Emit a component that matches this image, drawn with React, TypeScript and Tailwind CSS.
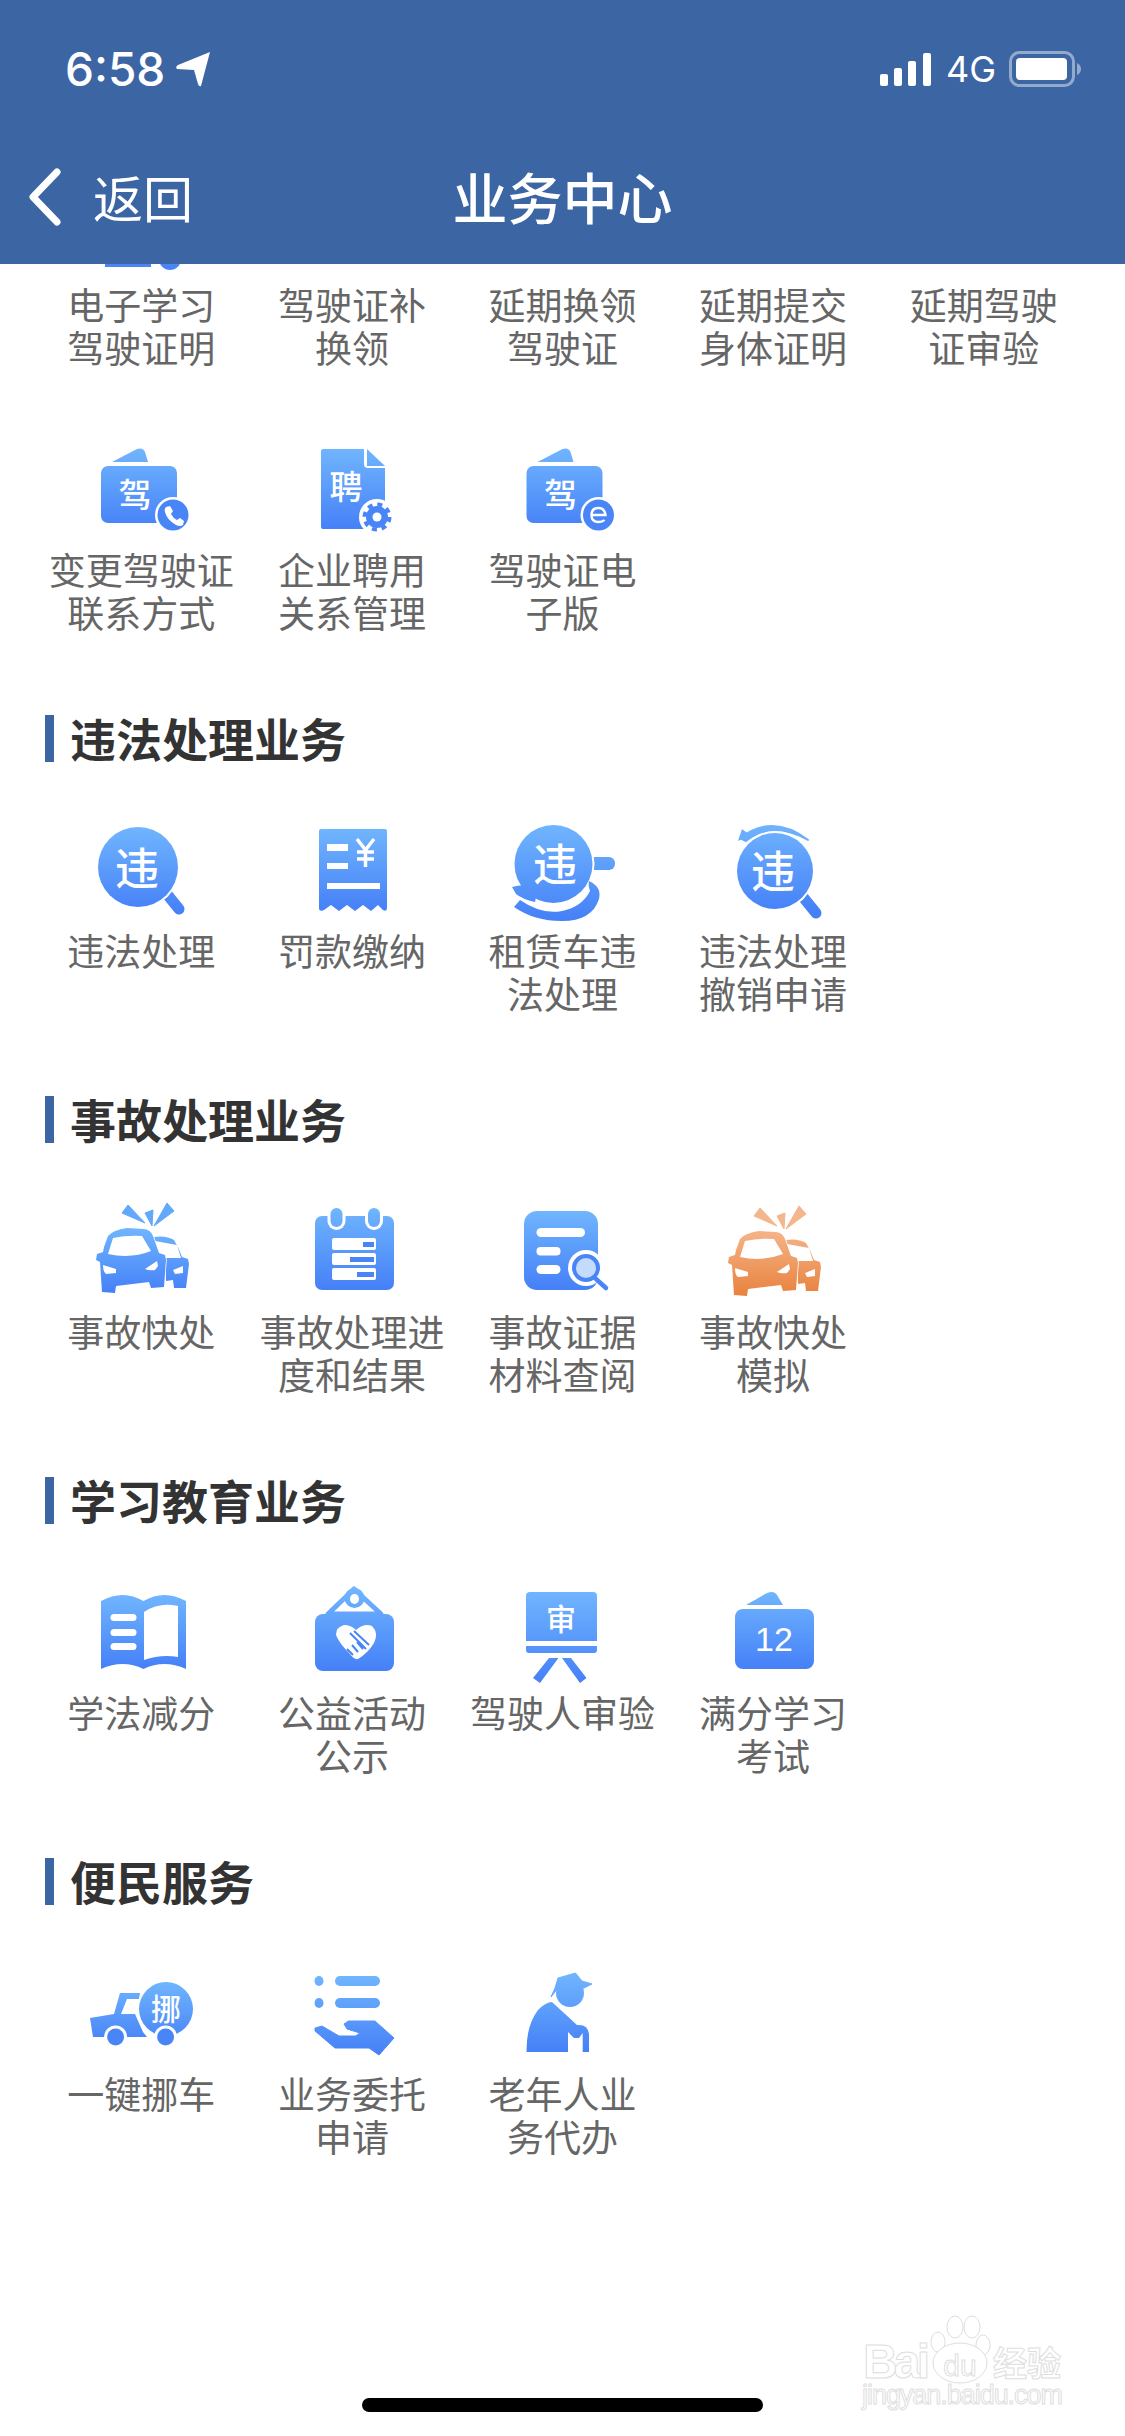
import type { ReactNode } from "react";

// every icon is drawn in a 120x110 box centred on its grid column
function Ico({ id, y1, y2, from = "#70b5fe", to = "#4580f7", children }: { id: string; y1: number; y2: number; from?: string; to?: string; children: ReactNode }) {
  return (
    <svg width="120" height="110" viewBox="0 0 120 110" className="overflow-visible">
      <defs>
        <linearGradient id={id} gradientUnits="userSpaceOnUse" x1="0" x2="0" y1={y1} y2={y2}>
          <stop offset="0" stopColor={from} />
          <stop offset="1" stopColor={to} />
        </linearGradient>
      </defs>
      {children}
    </svg>
  );
}

function Glyph({ x, y, size, children }: { x: number; y: number; size: number; children: string }) {
  return (
    <text x={x} y={y} fontSize={size} fontWeight={500} fill="#fff" textAnchor="middle" dominantBaseline="central" fontFamily="'Noto Sans CJK SC', sans-serif">
      {children}
    </text>
  );
}

function CardIcon({ id, dx, badge }: { id: string; dx: number; badge: "phone" | "e" }) {
  const f = `url(#${id})`;
  return (
    <Ico id={id} y1={9} y2={90}>
      <g transform={`translate(${dx} 0)`}>
        <path d="M31 22 L56 9 Q62 7 64 12 L67 22 Z" fill={f} />
        <rect x="20" y="26" width="76" height="57" rx="7" fill={f} />
        <Glyph x={54} y={53} size={33}>驾</Glyph>
        <circle cx="92" cy="75" r="18" fill="#fff" />
        <circle cx="92" cy="75" r="15.5" fill="#4a85f8" />
        {badge === "phone" ? (
          <path d="M85 67 l4 -1 l3 5 l-2 3 q2 4 6 6 l3 -2 l4 3 l-1 4 q-3 2 -7 0 q-9 -5 -11 -13 q-1 -3 1 -5 z" fill="#fff" />
        ) : (
          <g fill="none" stroke="#fff" strokeWidth="2.4">
            <path d="M85 75 H99 Q98 68 92 68 Q85 68 85 75 Q85 82 92 82 Q96 82 98 80" />
          </g>
        )}
      </g>
    </Ico>
  );
}

function SearchViolation({ id, cx, cy, r, tx, ty, top }: { id: string; cx: number; cy: number; r: number; tx: number; ty: number; top?: boolean }) {
  const f = `url(#${id})`;
  return (
    <Ico id={id} y1={top ? 1 : 6} y2={92}>
      {top && (
        <>
          <path d="M29 8 L25 20 L37 14 Z" fill={f} />
          <path d="M27 17 Q60 -8 95 19 Q60 -1 33 20 Z" fill={f} stroke={f} strokeWidth="2" strokeLinejoin="round" />
        </>
      )}
      <path d={`M${cx + 28} ${cy + 26} L${cx + 41} ${cy + 42}`} stroke={f} strokeWidth="11" strokeLinecap="round" />
      <circle cx={cx} cy={cy} r={r + 2} fill="#fff" />
      <circle cx={cx} cy={cy} r={r} fill={f} />
      <Glyph x={tx} y={ty} size={44}>违</Glyph>
    </Ico>
  );
}

function BillIcon() {
  const f = "url(#bill)";
  return (
    <Ico id="bill" y1={8} y2={90}>
      <path d="M27 10 Q27 8 29 8 H93 Q95 8 95 10 V87 Q95 91 91 89 L86 84 L79 90 L71 84 L63 90 L55 84 L47 90 L39 84 L32 89 Q27 91 27 87 Z" fill={f} />
      <rect x="35" y="23" width="21" height="7" fill="#fff" />
      <rect x="35" y="42" width="21" height="6" fill="#fff" />
      <rect x="35" y="62" width="53" height="6" fill="#fff" />
      <path d="M65 18 L73.5 29 L82 18 M73.5 29 V46 M65 31 H82 M65 38 H82" fill="none" stroke="#fff" strokeWidth="3.5" />
    </Ico>
  );
}

function RentalIcon() {
  const f = "url(#rental)";
  return (
    <Ico id="rental" y1={4} y2={100}>
      <rect x="80" y="36" width="33" height="13" rx="6" fill={f} />
      <circle cx="51.5" cy="43" r="41" fill="#fff" />
      <circle cx="51.5" cy="43" r="39" fill={f} />
      <Glyph x={53} y={41} size={44}>违</Glyph>
      <path d="M10 66 Q30 60 54 75 L35 72 L33 81 Q20 78 14 73 Z" fill={f} />
      <path d="M12 86 L18 79 Q40 94 60 90 Q80 86 88 70 Q86 64 87 60 Q100 66 97 78 Q90 100 60 100 Q32 100 12 86 Z" fill={f} />
    </Ico>
  );
}

function CarIcon({ id, dy, from, to, spark }: { id: string; dy: number; from: string; to: string; spark: string }) {
  const f = `url(#${id})`;
  return (
    <Ico id={id} y1={26 + dy} y2={91 + dy} from={from} to={to}>
      <g transform={`translate(0 ${dy})`}>
        <path d="M41 11 L47 3 L64 21 Z M64 11 L72 8 L71 24 Z M86 1 L93 9 L73 24 Z" fill={spark} stroke={spark} strokeWidth="1" strokeLinejoin="round" />
        <path d="M73 35 Q85 33 93 38 Q98 46 101 55 L107 57 L108 62 L105 86 L93 86 L92 78 L85 79 L84 56 L100 56 L96 43 L74 39 Z" fill={f} />
        <path d="M23 45 L27 34 Q32 28 46 26 L63 27 Q70 28 72 34 L78 51 L84 53 L85 58 L83 85 L70 86 L68 80 L35 84 L34 91 L21 90 L19 60 L15 58 L16 52 L22 50 Z" fill={f} stroke="#fff" strokeWidth="1.5" paintOrder="stroke" />
        <path d="M27 52 L32 36 Q46 33 61 34 L70 49 Q50 57 27 52 Z" fill="#fff" />
        <path d="M22 63 L35 67 L35 71 L25 72 Q22 70 22 63 Z M64 67 L76 59 L77 64 L74 68 Q68 69 64 67 Z M92 68 L102 64 L102 71 L94 72 Z" fill="#fff" />
      </g>
    </Ico>
  );
}

function ClipboardIcon() {
  const f = "url(#clip)";
  return (
    <Ico id="clip" y1={6} y2={88}>
      <rect x="23" y="14" width="79" height="74" rx="7" fill={f} />
      {[44.5, 82].map((x) => (
        <g key={x}>
          <rect x={x - 9} y="4" width="18" height="24" rx="9" fill="#fff" />
          <rect x={x - 6} y="6" width="12" height="19" rx="6" fill={f} />
        </g>
      ))}
      {[[36, 71, 11], [51, 58, 24], [66, 65, 17]].map(([y, x, w]) => (
        <g key={y}>
          <rect x="40" y={y} width="44" height="12" rx="2" fill="#fff" />
          <rect x={x} y={y + 4} width={w} height="5" fill="#4a85f8" />
        </g>
      ))}
    </Ico>
  );
}

function DocSearchIcon() {
  const f = "url(#docs)";
  return (
    <Ico id="docs" y1={9} y2={88}>
      <rect x="22" y="9" width="74" height="79" rx="13" fill={f} />
      <rect x="34.5" y="26" width="48.5" height="9" rx="4.5" fill="#fff" />
      <rect x="34.5" y="45" width="24" height="8.5" rx="4" fill="#fff" />
      <rect x="34.5" y="63" width="24" height="9" rx="4.5" fill="#fff" />
      <circle cx="84" cy="66" r="18" fill="#fff" />
      <circle cx="84" cy="66" r="12" fill="#c4dcfb" stroke="#4a85f8" strokeWidth="4" />
      <path d="M94 77 L104 86" stroke="#4a85f8" strokeWidth="4.5" strokeLinecap="round" />
    </Ico>
  );
}

function BookIcon() {
  const f = "url(#book)";
  return (
    <Ico id="book" y1={12} y2={86}>
      <path d="M20 18 Q42 6 62.5 18 Q83 6 105 18 V86 Q83 76 62.5 86 Q42 76 20 86 Z" fill={f} />
      <path d="M63 29 Q78 19 97 23 V74 Q80 71 63 77 Z" fill="#fff" />
      <rect x="29.5" y="31" width="26" height="7" rx="3.5" fill="#fff" />
      <rect x="29.5" y="46" width="26" height="7" rx="3.5" fill="#fff" />
      <rect x="29.5" y="60" width="26" height="7" rx="3.5" fill="#fff" />
    </Ico>
  );
}

function SignIcon() {
  const f = "url(#sign)";
  return (
    <Ico id="sign" y1={6} y2={88}>
      <path d="M36 31 L62 6 L89 31 Z" fill="none" stroke={f} strokeWidth="5" strokeLinejoin="round" />
      <ellipse cx="62.5" cy="15" rx="10" ry="10" fill={f} />
      <ellipse cx="62.5" cy="16" rx="4.5" ry="5" fill="#fff" />
      <rect x="23" y="31" width="79" height="57" rx="8" fill={f} />
      <path d="M64 47 Q72 40 80 43 Q87 50 82 60 Q76 70 66 76 Q62 77 58 71 Q47 60 44 52 Q44 44 52 42 Q59 42 64 47 Z" fill="#fff" />
      <path d="M58 50 L74 66 M62 48 L77 62 M55 66 L61 72 M60 62 L66 69 M65 59 L71 66" stroke="#4a85f8" strokeWidth="2" fill="none" />
    </Ico>
  );
}

function EaselIcon() {
  const f = "url(#easel)";
  return (
    <Ico id="easel" y1={9} y2={100}>
      <path d="M24 13 Q24 9 28 9 H91 Q95 9 95 13 V58 H24 Z" fill={f} />
      <path d="M24 63 H95 V67 Q95 70 92 70 H27 Q24 70 24 67 Z" fill={f} />
      <path d="M47 75 H56.5 L38 100 L31 95 Z M60 75 H69 L84.5 95 L78 100 Z" fill={f} />
      <Glyph x={59} y={34} size={30}>审</Glyph>
    </Ico>
  );
}

function CalendarIcon() {
  const f = "url(#cal)";
  return (
    <Ico id="cal" y1={9} y2={86}>
      <path d="M33 22 L54 10 Q61 7 64 12 L70 22 Z" fill={f} />
      <rect x="22" y="26" width="79" height="60" rx="8" fill={f} />
      <text x="61" y="68" fontSize="34" fill="#fff" textAnchor="middle" fontFamily="'Liberation Sans', sans-serif">12</text>
    </Ico>
  );
}

function TowIcon() {
  const f = "url(#tow)";
  return (
    <Ico id="tow" y1={18} y2={82}>
      <path d="M39 29 H59 L58 35 H46 L40 50 H54 L62 68 L66 73 H12 L9 54 L33 50 Z" fill={f} />
      <circle cx="85" cy="45" r="29" fill="#fff" />
      <circle cx="85" cy="45" r="27" fill={f} />
      <Glyph x={85} y={43} size={30}>挪</Glyph>
      {[34.6, 84.6].map((x) => (
        <g key={x}>
          <circle cx={x} cy="73" r="11.5" fill="#fff" />
          <circle cx={x} cy="73" r="8.5" fill="#4a85f8" />
        </g>
      ))}
    </Ico>
  );
}

function HandIcon() {
  const f = "url(#hand)";
  return (
    <Ico id="hand" y1={12} y2={91}>
      <ellipse cx="27" cy="17" rx="4.5" ry="5" fill={f} />
      <ellipse cx="27" cy="39" rx="4.5" ry="5" fill={f} />
      <rect x="43" y="12" width="45" height="10" rx="5" fill={f} />
      <rect x="43" y="34" width="45" height="10" rx="5" fill={f} />
      <path d="M23 64 L30 62 L47 72 H63.5 L68 69 L55 65 L52 60 L56.5 57 H83 L102 74 L87 91 L77 84 H43 L23 67 Z" fill={f} stroke={f} strokeLinejoin="round" />
    </Ico>
  );
}

function ElderIcon() {
  const f = "url(#elder)";
  return (
    <Ico id="elder" y1={9} y2={88}>
      <circle cx="68" cy="29" r="14" fill={f} />
      <path d="M56 14 L73.5 9 L80 17 L90 20 L82 24 H56 L49 33 L53 24 Z" fill={f} stroke={f} strokeLinejoin="round" />
      <path d="M24.6 88 Q24 62 36 46 Q44 38 50 38 L75 61 Q86 60 87 70 V88 H80.7 V69 L77 74 H72 L66 68 V88 Z" fill={f} />
    </Ico>
  );
}

type Item = { label: string; icon: ReactNode };

const licenceRow: string[] = ["电子学习\n驾驶证明", "驾驶证补\n换领", "延期换领\n驾驶证", "延期提交\n身体证明", "延期驾驶\n证审验"];

const licenceRow2: Item[] = [
  { label: "变更驾驶证\n联系方式", icon: <CardIcon id="card1" dx={0} badge="phone" /> },
  {
    label: "企业聘用\n关系管理",
    icon: (
      <Ico id="hire" y1={9} y2={90}>
        <path d="M29 11 Q29 9 31 9 H72 V24 Q72 28 76 28 H93 V89 H31 Q29 89 29 87 Z" fill="url(#hire)" />
        <path d="M75 9 L93 26 H75 Z" fill="url(#hire)" />
        <Glyph x={54} y={45} size={33}>聘</Glyph>
        <circle cx="85" cy="77" r="18" fill="#fff" />
        <circle cx="85" cy="77" r="11" fill="#4a85f8" />
        <circle cx="85" cy="77" r="12.5" fill="none" stroke="#4a85f8" strokeWidth="4" strokeDasharray="5 4.8" />
        <circle cx="85" cy="77" r="4.5" fill="#fff" />
      </Ico>
    ),
  },
  { label: "驾驶证电\n子版", icon: <CardIcon id="card2" dx={4.5} badge="e" /> },
];

const sections: { title: string; items: Item[] }[] = [
  {
    title: "违法处理业务",
    items: [
      { label: "违法处理", icon: <SearchViolation id="v1" cx={57} cy={46} r={40} tx={56} ty={45} /> },
      { label: "罚款缴纳", icon: <BillIcon /> },
      { label: "租赁车违\n法处理", icon: <RentalIcon /> },
      { label: "违法处理\n撤销申请", icon: <SearchViolation id="v2" cx={62} cy={50} r={38} tx={60} ty={48} top /> },
    ],
  },
  {
    title: "事故处理业务",
    items: [
      { label: "事故快处", icon: <CarIcon id="car1" dy={0} from="#70b5fe" to="#4580f7" spark="#62a8fb" /> },
      { label: "事故处理进\n度和结果", icon: <ClipboardIcon /> },
      { label: "事故证据\n材料查阅", icon: <DocSearchIcon /> },
      { label: "事故快处\n模拟", icon: <CarIcon id="car2" dy={3} from="#f4b285" to="#e87f3a" spark="#f4b68c" /> },
    ],
  },
  {
    title: "学习教育业务",
    items: [
      { label: "学法减分", icon: <BookIcon /> },
      { label: "公益活动\n公示", icon: <SignIcon /> },
      { label: "驾驶人审验", icon: <EaselIcon /> },
      { label: "满分学习\n考试", icon: <CalendarIcon /> },
    ],
  },
  {
    title: "便民服务",
    items: [
      { label: "一键挪车", icon: <TowIcon /> },
      { label: "业务委托\n申请", icon: <HandIcon /> },
      { label: "老年人业\n务代办", icon: <ElderIcon /> },
    ],
  },
];

function Label({ text }: { text: string }) {
  return <div className="-mt-[2px] h-[88px] whitespace-pre-line text-center text-[37px] leading-[43px] text-[#666]">{text}</div>;
}

function Cell({ item }: { item: Item }) {
  return (
    <div className="flex flex-col items-center">
      <div className="flex h-[110px] items-center justify-center">{item.icon}</div>
      <Label text={item.label} />
    </div>
  );
}

function Section({ title, items }: { title: string; items: Item[] }) {
  return (
    <section className="mt-[78px]">
      <div className="flex h-[48px] items-center gap-[16px] pl-[45px]">
        <span className="h-[47px] w-[9px] bg-[#3c65a4]" />
        <h2 className="pb-[3px] text-[46px] leading-[48px] font-bold text-[#333]">{title}</h2>
      </div>
      <div className="mt-[59px] grid grid-cols-5 gap-y-[69px] px-[36px]">
        {items.map((it) => (
          <Cell key={it.label} item={it} />
        ))}
      </div>
    </section>
  );
}

function StatusBar() {
  return (
    <div className="flex h-[138px] items-center justify-between pr-[44px] pl-[65px] text-white">
      <div className="flex items-center gap-[10px]">
        <span className="font-['Inter',sans-serif] text-[46px] leading-none font-medium">6:58</span>
        <svg width="36" height="36" viewBox="0 0 36 36">
          <path d="M35 1 L26 35 Q24 36 23 33 L19 19 L2 18 Q0 16 3 14 Z" fill="#fff" />
        </svg>
      </div>
      <div className="flex items-center">
        <svg width="52" height="33" viewBox="0 0 52 33">
          <rect x="0" y="21" width="8" height="12" rx="2" fill="#fff" />
          <rect x="14" y="15" width="8" height="18" rx="2" fill="#fff" />
          <rect x="28" y="8" width="8" height="25" rx="2" fill="#fff" />
          <rect x="43" y="0" width="8" height="33" rx="2" fill="#fff" />
        </svg>
        <span className="ml-[14px] w-[49px] font-['Inter',sans-serif] text-[36px] leading-none">4G</span>
        <svg className="ml-[14px]" width="72" height="36" viewBox="0 0 72 36">
          <rect x="1.5" y="1.5" width="63" height="33" rx="9" fill="none" stroke="#fff" strokeOpacity="0.45" strokeWidth="3" />
          <rect x="7" y="7" width="51" height="22" rx="4" fill="#fff" />
          <path d="M68 12 Q72 14 72 18 Q72 22 68 24 Z" fill="#fff" fillOpacity="0.45" />
        </svg>
      </div>
    </div>
  );
}

function Watermark() {
  return (
    <svg className="absolute top-[2310px] left-[860px]" width="210" height="105" viewBox="0 0 210 105">
      <g fill="#fff" stroke="#dedede" strokeWidth="1">
        <ellipse cx="95" cy="17" rx="8" ry="11" />
        <ellipse cx="112" cy="17" rx="8" ry="11" />
        <ellipse cx="78" cy="32" rx="7" ry="10" />
        <ellipse cx="123" cy="35" rx="7" ry="10" />
        <ellipse cx="100" cy="53" rx="27" ry="20" />
        <text x="3" y="68" fontSize="48" fontWeight="700" fontFamily="'Liberation Sans', sans-serif" textLength="67">Bai</text>
        <text x="100" y="66" fontSize="30" textAnchor="middle" fontFamily="'Liberation Sans', sans-serif">du</text>
        <text x="133" y="66" fontSize="34" fontWeight="700" fontFamily="'Noto Sans CJK SC', sans-serif">经验</text>
        <text x="2" y="94" fontSize="27" fontFamily="'Liberation Sans', sans-serif" textLength="201">jingyan.baidu.com</text>
      </g>
    </svg>
  );
}

export default function App() {
  return (
    <div className="relative flex min-h-[2436px] flex-col bg-white font-['Noto_Sans_CJK_SC',sans-serif]">
      <header className="h-[264px] bg-[#3c65a4]">
        <StatusBar />
        <div className="grid h-[118px] grid-cols-[1fr_auto_1fr] items-center text-white">
          <div className="flex items-center pl-[28px]">
            <svg width="34" height="58" viewBox="0 0 34 58">
              <path d="M29 4 L5 29 L29 54" fill="none" stroke="#fff" strokeWidth="7" strokeLinecap="round" strokeLinejoin="round" />
            </svg>
            <span className="mb-[3px] ml-[31px] text-[50px] leading-none">返回</span>
          </div>
          <h1 className="mb-[3px] text-[55px] leading-none font-medium">业务中心</h1>
          <div />
        </div>
      </header>

      <main className="flex-1">
        <div className="grid grid-cols-5 gap-y-[69px] px-[36px]">
          {licenceRow.map((label, i) => (
            <div key={label} className="flex flex-col items-center">
              <div className="h-[21px] w-[120px] overflow-hidden">
                {i === 0 && (
                  <svg width="120" height="21" viewBox="0 0 120 21">
                    <rect x="24" y="0" width="46" height="3" fill="#4a85f8" />
                    <circle cx="89" cy="-5" r="11" fill="#4a85f8" />
                  </svg>
                )}
              </div>
              <Label text={label} />
            </div>
          ))}
          {licenceRow2.map((it) => (
            <Cell key={it.label} item={it} />
          ))}
        </div>
        {sections.map((s) => (
          <Section key={s.title} title={s.title} items={s.items} />
        ))}
      </main>

      <div className="flex h-[38px] justify-center">
        <div className="h-[14px] w-[401px] rounded-full bg-black" />
      </div>
      <Watermark />
    </div>
  );
}
